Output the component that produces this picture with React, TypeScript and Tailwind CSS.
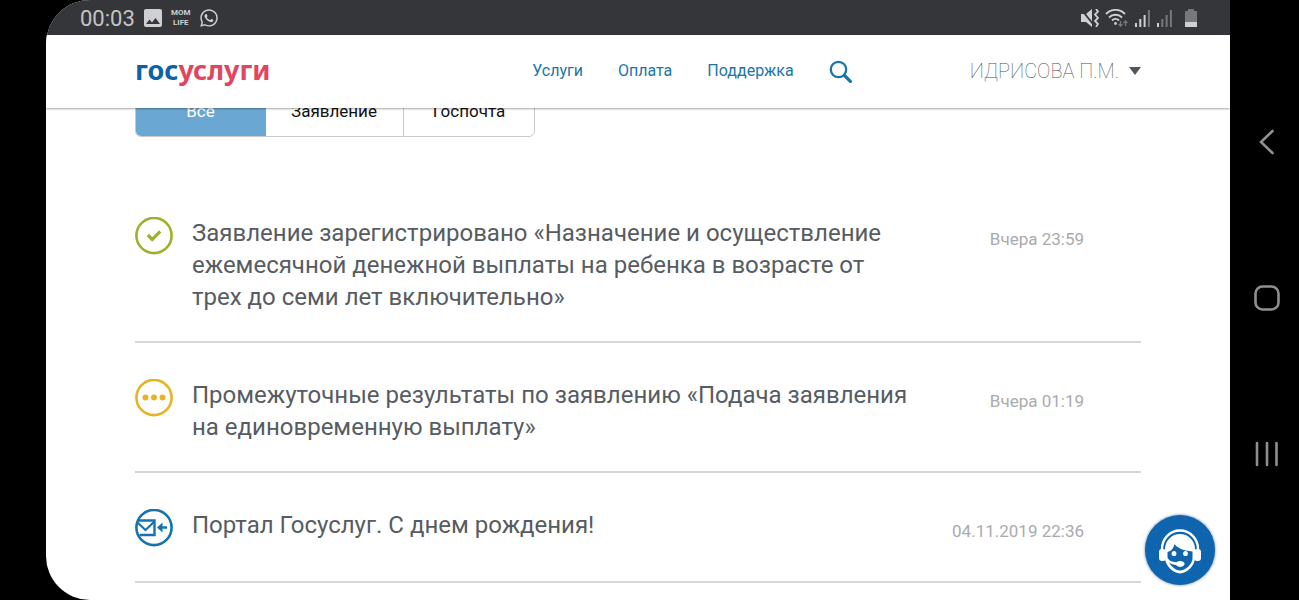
import React from 'react';
import { FaWhatsapp } from 'react-icons/fa';
import { MdImage } from 'react-icons/md';

type Status = 'done' | 'progress' | 'mail';

interface Notice {
    status: Status;
    title: string;
    date: string;
}

const notices: Notice[] = [
    {
        status: 'done',
        title: 'Заявление зарегистрировано «Назначение и осуществление ежемесячной денежной выплаты на ребенка в возрасте от трех до семи лет включительно»',
        date: 'Вчера 23:59',
    },
    {
        status: 'progress',
        title: 'Промежуточные результаты по заявлению «Подача заявления на единовременную выплату»',
        date: 'Вчера 01:19',
    },
    {
        status: 'mail',
        title: 'Портал Госуслуг. С днем рождения!',
        date: '04.11.2019 22:36',
    },
];

const StatusIcon: React.FC<{ status: Status }> = ({ status }) => {
    if (status === 'done') {
        return (
            <svg viewBox="0 0 38 38" className="size-[38px] shrink-0" fill="none" stroke="#9ab32c" aria-hidden="true">
                <circle cx="19" cy="18.500" r="17.6" strokeWidth="2.6" />
                <path d="M12.8 18l4.4 4.4 8-8" strokeWidth="3.2" />
            </svg>
        );
    }

    if (status === 'progress') {
        return (
            <svg viewBox="0 0 38 38" className="size-[38px] shrink-0" fill="#e6b422" aria-hidden="true">
                <circle cx="19" cy="18.500" r="17.6" fill="none" stroke="#e6b422" strokeWidth="2.6" />
                <circle cx="10.5" cy="18.500" r="3" />
                <circle cx="19" cy="18.500" r="3" />
                <circle cx="27.5" cy="18.500" r="3" />
            </svg>
        );
    }

    return (
        <svg viewBox="0 0 38 38" className="size-[38px] shrink-0" fill="none" stroke="#1672b0" aria-hidden="true">
            <circle cx="19" cy="18.500" r="17.6" strokeWidth="2.6" />
            <path d="M4 11.500H19.500v14.500H4.500" strokeWidth="2.4" />
            <path d="M2.500 13.500l8 7.500 9-8.500" strokeWidth="2.2" />
            <path d="M32 18.500h-7" strokeWidth="2.6" />
            <path d="M22 18.500l5.500-5v10z" fill="#1672b0" stroke="none" />
        </svg>
    );
};

const Signal: React.FC<{ level: number }> = ({ level }) => (
    <svg viewBox="0 0 16 18" className="h-[18px] w-4" aria-hidden="true">
        {[4, 8, 12, 17].map((h, i) => (
            <rect key={h} x={i * 4.3} y={18 - h} width="2" height={h} fill={i < level ? '#d0d0d2' : '#77787b'} />
        ))}
    </svg>
);

const StatusBar: React.FC = () => (
    <div className="flex h-[35px] items-center bg-[#35363a] pr-[33px] pl-[34px] text-[#d0d0d2]">
        <span className="pt-0.5 text-[22px] leading-8 text-[#c4c4c6]">00:03</span>
        <MdImage className="ml-1.5 size-6" />
        <span className="ml-1.5 flex w-5 flex-col items-center text-[8px] leading-[10px] font-bold">
            <span>MOM</span>
            <span>LIFE</span>
        </span>
        <FaWhatsapp className="ml-2 size-5" />

        <div className="ml-auto flex items-center">
            <svg viewBox="0 0 18 18" className="size-[18px]" aria-hidden="true">
                <path d="M0 5h5l6-5v18l-6-5H0z" fill="currentColor" />
                <path d="M0 0l12 15" stroke="#35363a" strokeWidth="1.8" />
                <path d="M15 0l2 2.5-3 3 3 3.5-3 3 3 3-2 3" fill="none" stroke="currentColor" strokeWidth="1.8" />
            </svg>
            <svg viewBox="0 0 24 18" className="ml-1.5 h-[18px] w-6" fill="none" stroke="currentColor" strokeWidth="1.9" aria-hidden="true">
                <path d="M1 5a13 13 0 0 1 19 0M4 8.500a9 9 0 0 1 13 0M7 11.500a5 5 0 0 1 7 0" />
                <circle cx="10.5" cy="14.5" r="1.4" fill="currentColor" stroke="none" />
                <path d="M15.5 12v5m-2-2l2 2 2-2M20.500 17v-5m-2 2l2-2 2 2" stroke="#77787b" strokeWidth="1.3" />
            </svg>
            <div className="ml-1.5 flex gap-1.5">
                <Signal level={3} />
                <Signal level={1} />
            </div>
            <svg viewBox="0 0 12 18" className="ml-3 h-[18px] w-3" aria-hidden="true">
                <path d="M3 0h6v2h3v12H0V2h3z" fill="#77787b" />
                <path d="M0 13h12v5H0z" fill="currentColor" />
            </svg>
        </div>
    </div>
);

const Header: React.FC = () => (
    <header className="sticky top-0 z-10 flex h-[73px] items-center bg-white px-[89px] pb-0.5 shadow-[0_1px_2px_rgba(0,0,0,0.35)]">
        <a href="#" className="pb-0.5 font-['Noto_Sans',sans-serif] text-[27px] leading-8 font-bold text-[#0d62a6]">
            гос<span className="text-[#e0465f]">услуги</span>
        </a>
        <nav className="ml-auto flex items-center gap-[35px] text-base text-[#1a75a8]">
            <a href="#">Услуги</a>
            <a href="#">Оплата</a>
            <a href="#">Поддержка</a>
            <button type="button" aria-label="Поиск" className="pt-0.5">
                <svg viewBox="0 0 23 23" className="size-[23px]" fill="none" stroke="currentColor" aria-hidden="true">
                    <circle cx="9.500" cy="9.500" r="7.7" strokeWidth="2.3" />
                    <path d="M15 15l7.500 7.500" strokeWidth="3.2" />
                </svg>
            </button>
        </nav>
        <button type="button" className="ml-[118px] flex items-center gap-2.5 text-xl font-thin text-[#4a4f54]">
            ИДРИСОВА П.М.
            <svg viewBox="0 0 12 8" className="h-2 w-3" aria-hidden="true">
                <path d="M0 0h12L6 8z" fill="#4f575e" />
            </svg>
        </button>
    </header>
);

const Filters: React.FC = () => (
    <div className="-mt-[23px] flex h-[52px] w-[400px] overflow-hidden rounded-md border border-[#c9c9c9] text-[17px] text-[#111]">
        <button type="button" className="-m-px w-[131px] bg-[#6aa8d3] pt-0.5 text-white">Все</button>
        <button type="button" className="flex-1 border-r border-[#c9c9c9] pt-0.5">Заявление</button>
        <button type="button" className="w-[130px] pt-0.5">Госпочта</button>
    </div>
);

const NoticeRow: React.FC<{ notice: Notice }> = ({ notice }) => (
    <li className="flex min-h-[110px] items-start border-b-2 border-[#d6d6d6] pt-9 pb-7">
        <StatusIcon status={notice.status} />
        <a href="#" className="ml-[19px] flex-1 text-2xl leading-8 text-[#575c62]">{notice.title}</a>
        <time className="mt-1.5 w-[224px] shrink-0 pr-[57px] text-right text-[17px] leading-8 text-[#a9abad]">
            {notice.date}
        </time>
    </li>
);

const SupportButton: React.FC = () => (
    <button
        type="button"
        aria-label="Чат поддержки"
        className="absolute right-[15px] bottom-[15px] size-[70px] rounded-full bg-[#0f64ae] shadow-[0_0_3px_rgba(15,60,110,0.7)]"
    >
        <svg viewBox="0 0 70 70" className="size-full" aria-hidden="true">
            <path d="M17 36v-2a18 18.500 0 0 1 36 0v2" fill="none" stroke="#fff" strokeWidth="2.400" />
            <rect x="14" y="34" width="7" height="12" rx="3" fill="#fff" />
            <rect x="49" y="34" width="7" height="12" rx="3" fill="#fff" />
            <path d="M20 34a15 15 0 0 1 30 0v9c0 7-8 15.500-15 15.500S20 50 20 43z" fill="#fff" />
            <path d="M22.500 37c4-1 6-3.500 7-8 3 4 8 6.500 18 7.500v7c0 5-6.500 12-12.500 12-4.500 0-9-4.500-11-8 2.500 1.800 4.500 2.300 7 2.600a4.500 3 0 1 0 .3-2.800c-4-.2-8-1.800-8.800-5z" fill="#0f64ae" />
            <ellipse cx="29" cy="38.500" rx="2.400" ry="2.600" fill="#fff" />
            <ellipse cx="40.500" cy="38.500" rx="2.400" ry="2.600" fill="#fff" />
        </svg>
    </button>
);

const SystemNav: React.FC = () => (
    <div className="flex w-[69px] shrink-0 flex-col items-center justify-center gap-[130px] pb-1 pl-1 text-[#8f8f8f]">
        <button type="button" aria-label="Назад">
            <svg viewBox="0 0 26 26" className="size-[26px]" fill="none" stroke="currentColor" strokeWidth="2.600" strokeLinecap="round" aria-hidden="true">
                <path d="M18.500 2L7 13l11.500 11" />
            </svg>
        </button>
        <button type="button" aria-label="Домой">
            <svg viewBox="0 0 26 26" className="size-[26px]" fill="none" stroke="currentColor" strokeWidth="2.600" aria-hidden="true">
                <rect x="1.500" y="1.500" width="23" height="23" rx="7" />
            </svg>
        </button>
        <button type="button" aria-label="Недавние">
            <svg viewBox="0 0 26 26" className="size-[26px]" fill="none" stroke="currentColor" strokeWidth="2.600" strokeLinecap="round" aria-hidden="true">
                <path d="M3 2v22M13 2v22M22.500 2v22" />
            </svg>
        </button>
    </div>
);

export default function App() {
    return (
        <div className="flex min-h-screen bg-black pl-[46px] font-[Roboto,sans-serif]">
            <div className="relative flex-1 overflow-hidden rounded-l-[44px] bg-white">
                <StatusBar />
                <Header />
                <main className="px-[89px]">
                    <Filters />
                    <ul className="mt-11">
                        {notices.map((notice) => (
                            <NoticeRow key={notice.title} notice={notice} />
                        ))}
                    </ul>
                </main>
                <SupportButton />
            </div>
            <SystemNav />
        </div>
    );
}
